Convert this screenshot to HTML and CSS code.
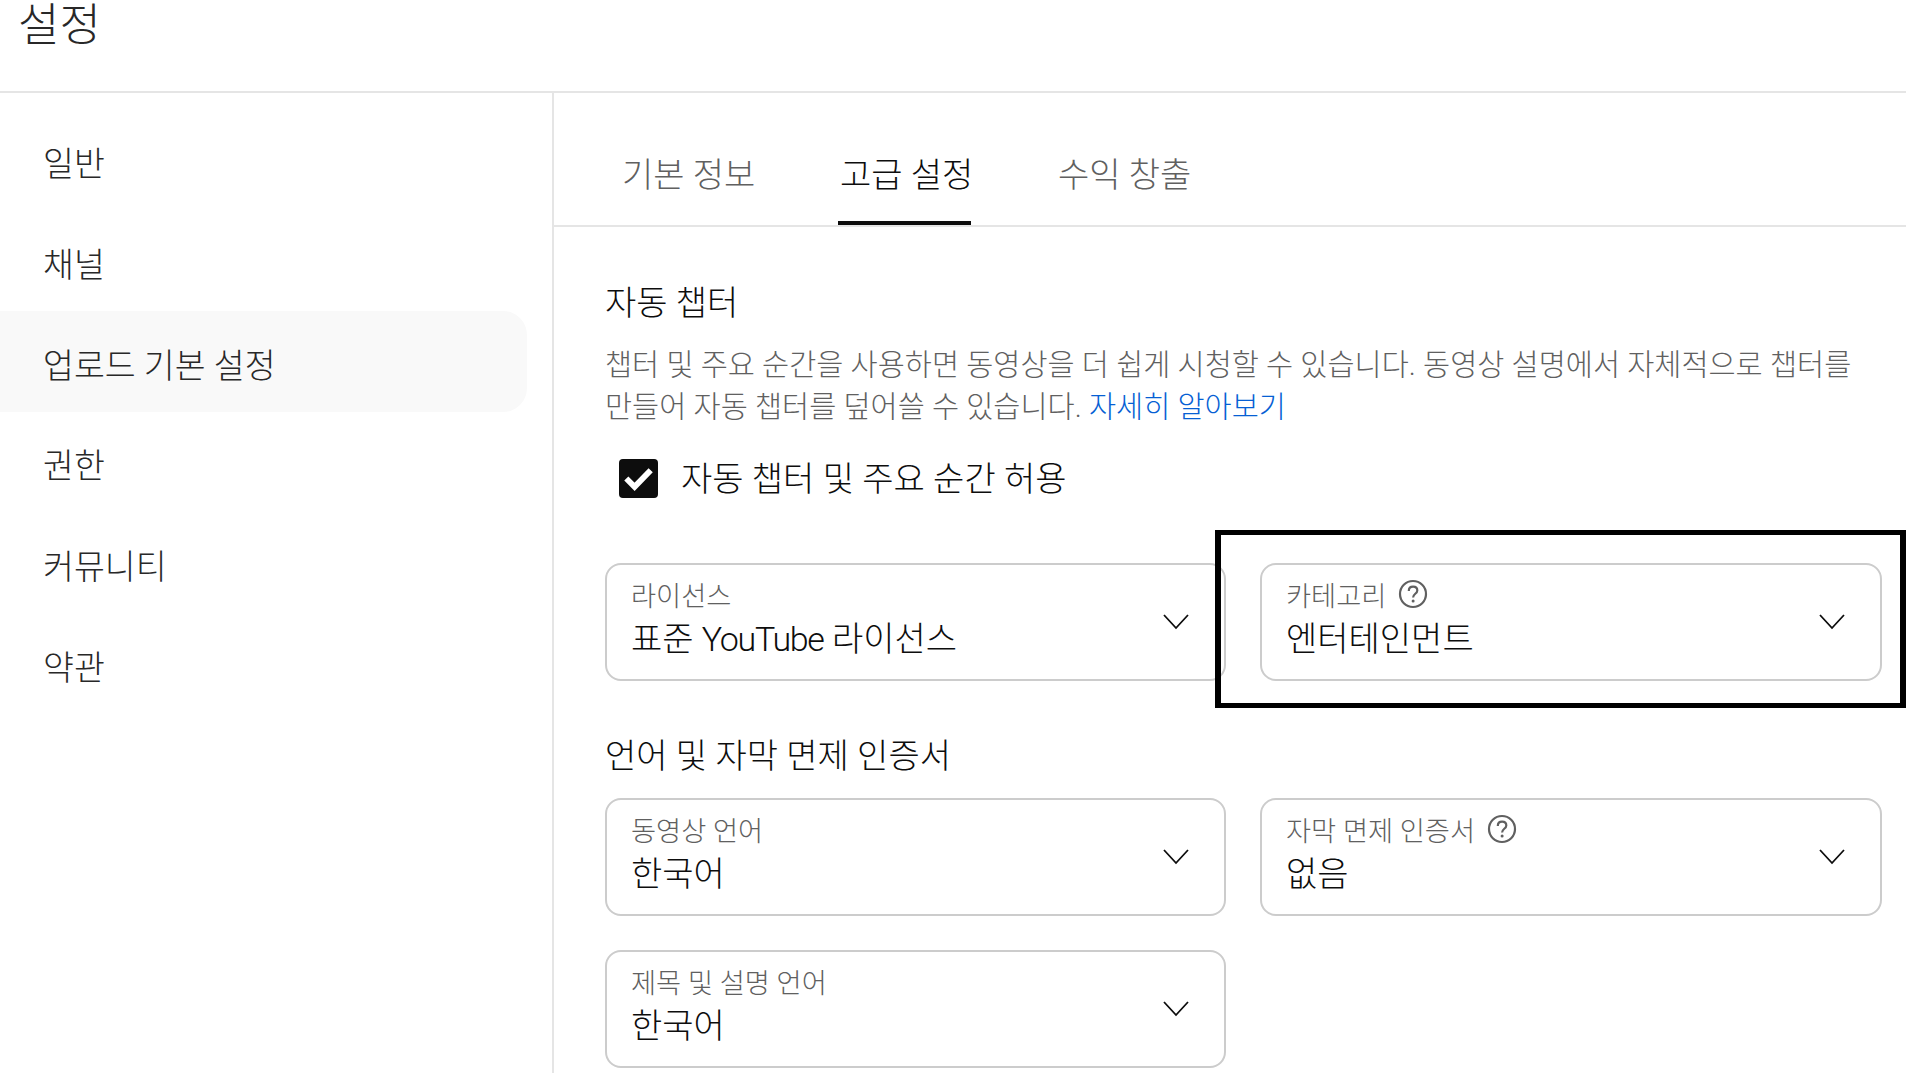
FILE: index.html
```html
<!DOCTYPE html>
<html lang="ko">
<head>
<meta charset="utf-8">
<title>설정</title>
<link rel="stylesheet" href="styles.css">
</head>
<body>
<div class="page">
  <header class="header"><h1 class="title">설정</h1></header>
  <div class="body">
    <nav class="sidebar">
      <a class="nav-item">일반</a>
      <a class="nav-item">채널</a>
      <a class="nav-item active">업로드 기본 설정</a>
      <a class="nav-item">권한</a>
      <a class="nav-item">커뮤니티</a>
      <a class="nav-item">약관</a>
    </nav>
    <main class="main">
      <div class="tabs">
        <div class="tab">기본 정보</div>
        <div class="tab selected">고급 설정</div>
        <div class="tab">수익 창출</div>
      </div>
      <div class="content">
        <h2 class="section-title">자동 챕터</h2>
        <p class="desc">챕터 및 주요 순간을 사용하면 동영상을 더 쉽게 시청할 수 있습니다. 동영상 설명에서 자체적으로 챕터를 만들어 자동 챕터를 덮어쓸 수 있습니다. <a class="link">자세히 알아보기</a></p>
        <label class="check">
          <svg class="checkbox" viewBox="0 0 40 40" width="39" height="39"><rect width="40" height="40" rx="4" fill="#0d0d0d"/><path d="M7.500 20l8.500 8.500L32.500 11.500" fill="none" stroke="#fff" stroke-width="6"/></svg>
          <span class="check-text">자동 챕터 및 주요 순간 허용</span>
        </label>
        <div class="grid first">
          <div class="field"><div class="field-text"><div class="field-label">라이선스</div><div class="field-value">표준 <span class="latin">YouTube</span> 라이선스</div></div><svg class="chev" viewBox="0 0 28 18" width="28" height="18"><path d="M2 2l12 13L26 2" fill="none" stroke="#0d0d0d" stroke-width="1.800"/></svg></div>
          <div class="field"><div class="field-text"><div class="field-label">카테고리<svg class="help" viewBox="0 0 30 30" width="30" height="30"><circle cx="15" cy="15" r="13" fill="none" stroke="#606060" stroke-width="2.200"/><path d="M10.800 12c0-2.700 1.900-4.300 4.300-4.300s4.200 1.500 4.200 3.800c0 3.300-4.200 3.300-4.200 7" fill="none" stroke="#606060" stroke-width="2.200"/><circle cx="15.100" cy="22" r="1.500" fill="#606060"/></svg></div><div class="field-value">엔터테인먼트</div></div><svg class="chev" viewBox="0 0 28 18" width="28" height="18"><path d="M2 2l12 13L26 2" fill="none" stroke="#0d0d0d" stroke-width="1.800"/></svg></div>
        </div>
        <h2 class="section-title lang">언어 및 자막 면제 인증서</h2>
        <div class="grid">
          <div class="field"><div class="field-text"><div class="field-label">동영상 언어</div><div class="field-value">한국어</div></div><svg class="chev" viewBox="0 0 28 18" width="28" height="18"><path d="M2 2l12 13L26 2" fill="none" stroke="#0d0d0d" stroke-width="1.800"/></svg></div>
          <div class="field"><div class="field-text"><div class="field-label">자막 면제 인증서<svg class="help" viewBox="0 0 30 30" width="30" height="30"><circle cx="15" cy="15" r="13" fill="none" stroke="#606060" stroke-width="2.200"/><path d="M10.800 12c0-2.700 1.900-4.300 4.300-4.300s4.200 1.500 4.200 3.800c0 3.300-4.200 3.300-4.200 7" fill="none" stroke="#606060" stroke-width="2.200"/><circle cx="15.100" cy="22" r="1.500" fill="#606060"/></svg></div><div class="field-value">없음</div></div><svg class="chev" viewBox="0 0 28 18" width="28" height="18"><path d="M2 2l12 13L26 2" fill="none" stroke="#0d0d0d" stroke-width="1.800"/></svg></div>
          <div class="field"><div class="field-text"><div class="field-label">제목 및 설명 언어</div><div class="field-value">한국어</div></div><svg class="chev" viewBox="0 0 28 18" width="28" height="18"><path d="M2 2l12 13L26 2" fill="none" stroke="#0d0d0d" stroke-width="1.800"/></svg></div>
        </div>
      </div>
    </main>
  </div>
  <div class="annotation"></div>
</div>
</body>
</html>
```
FILE: styles.css
```css
* { box-sizing: border-box; }
html, body { margin: 0; height: 100%; overflow: hidden; background: #fff; }
body { font-family: Roboto, "Noto Sans CJK KR", "Noto Sans", sans-serif; color: #0d0d0d; font-weight: 300; }
.page { position: relative; width: 1906px; height: 1073px; overflow: hidden; }
.header { height: 93px; border-bottom: 2px solid #e5e5e5; padding: 2px 0 0 18px; }
.title { margin: 0; font-size: 45px; font-weight: 300; line-height: 48px; color: #282828; }
.body { display: flex; height: 980px; }
.sidebar { width: 554px; flex: none; border-right: 2px solid #e5e5e5; padding: 17px 25px 0 0; display: flex; flex-direction: column; }
.nav-item { height: 100.700px; padding: 3px 0 0 43px; display: flex; align-items: center; font-size: 33.600px; color: #282828; border-radius: 0 24px 24px 0; }
.nav-item.active { background: #f9f9f9; }
.main { flex: 1; min-width: 0; }
.tabs { height: 134px; border-bottom: 2px solid #e5e5e5; display: flex; padding-left: 66px; gap: 85px; align-items: flex-end; }
.tab { height: 95px; width: 133px; padding: 23px 0 0 2px; font-size: 34px; line-height: 44px; color: #606060; white-space: nowrap; }
.tab.selected { color: #0d0d0d; border-bottom: 4px solid #0d0d0d; }
.content { padding: 54px 24px 0 51px; }
.section-title { margin: 0; font-size: 34px; font-weight: 300; line-height: 44px; color: #0d0d0d; }
.desc { margin: 20px 0 0; font-size: 29.480px; line-height: 41.500px; color: #606060; word-break: keep-all; }
.link { color: #065fd4; }
.check { display: flex; align-items: center; gap: 23px; margin: 29px 0 0 14px; font-size: 34px; color: #0d0d0d; height: 40px; }
.checkbox { flex: none; margin-top: 2px; }
.check-text { margin-bottom: 2px; }
.grid { display: grid; grid-template-columns: 621px 622px; gap: 34px; }
.grid.first { margin-top: 66px; }
.lang { margin-top: 53px; margin-bottom: 20px; }
.field { height: 118px; border: 2px solid #cccccc; border-radius: 16px; padding: 0 34px 0 24px; display: flex; align-items: center; justify-content: space-between; }
.field-text { min-width: 0; align-self: flex-start; padding-top: 11px; }
.field-label { display: flex; align-items: center; gap: 12px; height: 36px; font-size: 27.300px; color: #606060; }
.field-value { font-size: 34px; line-height: 46px; margin-top: 4px; color: #0d0d0d; }
.latin { letter-spacing: -1.300px; }
.help { flex: none; }
.annotation { position: absolute; left: 1215px; top: 530px; width: 691px; height: 178px; border-style: solid; border-color: #000; border-width: 5px 6px; pointer-events: none; }
```
